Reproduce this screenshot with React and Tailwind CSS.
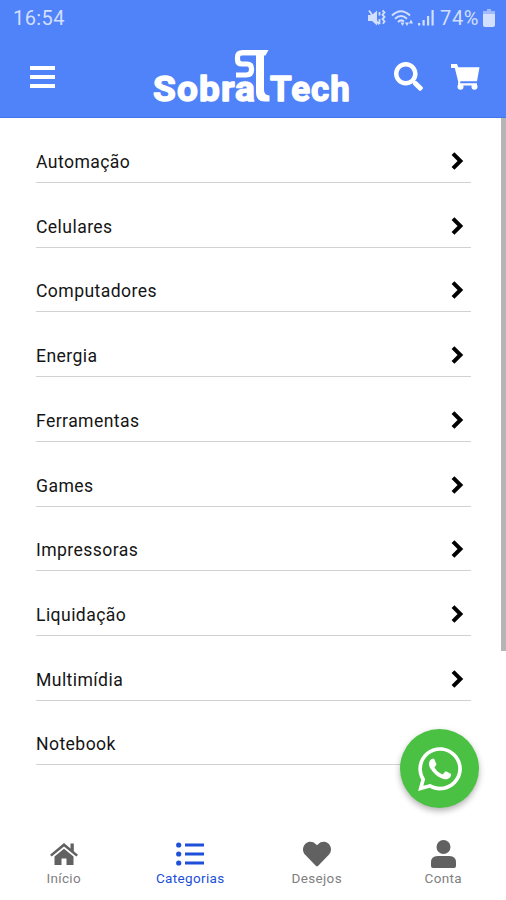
import React, { useState } from "react";
import { FaSearch, FaWhatsapp, FaHeart } from "react-icons/fa";

const categories = [
  "Automação",
  "Celulares",
  "Computadores",
  "Energia",
  "Ferramentas",
  "Games",
  "Impressoras",
  "Liquidação",
  "Multimídia",
  "Notebook",
];

function StatusIcons() {
  return (
    <svg className="h-5 w-[78px]" viewBox="0 0 78 20" fill="currentColor">
      {/* Muted speaker with vibration */}
      <path d="M0 7h4L9 2.500v15L4 13H0z" />
      <path d="M1 2.500l10 14M11.500 4v3.500M11.500 11v5M14.500 2.500l2 2-2 2.200 2 2.200-2 2.200 2 2.200-1.500 2.500" fill="none" stroke="currentColor" strokeWidth="1.800" />
      {/* Wifi */}
      <g fill="none" stroke="currentColor" strokeWidth="2">
        <path d="M24 7.500q9-8.500 18 0M27 10.800q6-5.500 12 0M30 14q3-3 6-.500" />
      </g>
      <path d="M32.500 14.500h4L34.500 18zM37 14.500h4l-2 3.500zM41 15.500l2-4 2 4z" />
      {/* Signal bars */}
      <path d="M50 15h2.200v2.500H50zM54.500 12h2.200v5.500h-2.200zM59 8h2.200v9.500H59zM63.500 2h2.200v15.500h-2.200z" />
    </svg>
  );
}

function Logo() {
  return (
    <svg className="h-[70px] w-[204px]" viewBox="0 -6 204 70" fill="white" fontFamily="Roboto, sans-serif" fontWeight="700">
      <g stroke="white" strokeWidth="1.400" strokeLinejoin="round">
        <text x="1" y="53" fontSize="35.500" letterSpacing="1.100" textLength="103" lengthAdjust="spacingAndGlyphs">Sobra</text>
        <text x="118" y="53" fontSize="35.500" letterSpacing="1.100" textLength="81" lengthAdjust="spacingAndGlyphs">Tech</text>
      </g>
      {/* Raised S whose top runs into the T, with the T stem curving into the l */}
      <path d="M104 4.700H91Q85.500 4.700 85.500 9.200V11.500Q85.500 16 90 16H95Q99.500 16 99.500 20.500V22Q99.500 27 94 27H84" fill="none" stroke="white" strokeWidth="5.200" />
      <path d="M90 2h26.500l-3 5.500h-1.500V42q0 5 5.500 5.500v6h-5q-8.500 0-8.500-9V7.300H90z" />
    </svg>
  );
}

function HomeIcon() {
  return (
    <svg className="h-[24px] w-[28px]" viewBox="0 0 28 24" fill="currentColor">
      <path d="M14 1L0 12.700l1.700 1.900L14 4.600l12.300 10 1.700-1.900-4.200-3.500V1.600h-3.300v4.900z" />
      <path d="M14 6.800L4.500 14.600V23h7v-6.500h5V23h7v-8.400z" />
    </svg>
  );
}

function ListIcon() {
  return (
    <svg className="h-[24px] w-[28px]" viewBox="0 0 28 24" fill="currentColor">
      <circle cx="2.700" cy="3" r="2.600" />
      <circle cx="2.700" cy="12" r="2.600" />
      <circle cx="2.700" cy="21" r="2.600" />
      <path d="M9 1.600h19v3H9zM9 10.500h19v3H9zM9 19.400h19v3H9z" />
    </svg>
  );
}

function PersonIcon() {
  return (
    <svg className="h-[28px] w-[25px]" viewBox="0 0 25 28" fill="currentColor">
      <circle cx="12.500" cy="7" r="7" />
      <path d="M0 26v-3.500Q0 16 6.500 16h12Q25 16 25 22.500V26q0 2-2 2H2q-2 0-2-2z" />
    </svg>
  );
}

function Chevron() {
  return (
    <svg className="mb-[4px] h-[18px] w-[13px] text-black" viewBox="0 0 13 18" fill="none" stroke="currentColor" strokeWidth="4">
      <path d="M2 1.700L9.400 9L2 16.300" />
    </svg>
  );
}

const tabs = [
  { label: "Início", icon: <HomeIcon /> },
  { label: "Categorias", icon: <ListIcon /> },
  { label: "Desejos", icon: <FaHeart className="h-[28px] w-[28px]" /> },
  { label: "Conta", icon: <PersonIcon /> },
];

export default function App() {
  const [active, setActive] = useState("Categorias");

  return (
    <div className="relative flex h-[900px] w-[506px] flex-col overflow-hidden bg-white font-[Roboto,sans-serif] text-[#151515]">
      <header className="h-[118px] shrink-0 border-b border-[#4576e8] bg-[#5083fa] text-white">
        <div className="flex h-9 items-center justify-between pl-[13px] pr-[11px] text-[20px] text-[#d3dfff]">
          <span className="tracking-[0.4px]">16:54</span>
          <div className="flex items-center">
            <StatusIcons />
            <span className="mr-[4px] -ml-[6px] tracking-[0.6px]">74%</span>
            <svg className="h-[18px] w-[12px]" viewBox="0 0 12 18" fill="currentColor">
              <path d="M4 0h4v2h4v4H0V2h4z" opacity="0.6" />
              <path d="M0 5h12v11q0 2-2 2H2q-2 0-2-2z" />
            </svg>
          </div>
        </div>
        <div className="flex h-[81px] items-center pr-[26px] pl-[30px]">
          <button className="flex w-[25px] flex-col gap-[5px]">
            <span className="h-[4px] w-full bg-white" />
            <span className="h-[4px] w-full bg-white" />
            <span className="h-[4px] w-full bg-white" />
          </button>
          <div className="ml-[97px]">
            <Logo />
          </div>
          <button className="ml-[38px]">
            <FaSearch className="h-[29px] w-[29px]" />
          </button>
          <button className="ml-auto">
            <svg className="h-[26px] w-[29px]" viewBox="0 0 29 26" fill="currentColor">
              <path d="M0 0h6l1.300 3.300H28.500L26 17.300H9.500l-.5 2h17v2.200H7l.2-4L3.800 4H0z" />
              <circle cx="9.500" cy="22.800" r="3" />
              <circle cx="23.500" cy="22.800" r="3" />
            </svg>
          </button>
        </div>
      </header>

      <main className="flex min-h-0 flex-1 justify-between">
        <ul className="w-[471px] pt-[0.4px] pl-9">
          {categories.map((name) => (
            <li key={name} className="flex h-[64.7px] items-end justify-between border-b-[1.5px] border-[#d2d2d2] pr-[7px] pb-[8px]">
              <span className="text-[17.6px] leading-6 tracking-[0.42px]">{name}</span>
              {name !== "Notebook" && <Chevron />}
            </li>
          ))}
        </ul>
        <div className="h-[533px] w-[5px] bg-[#b5b5b5]" />
      </main>

      <nav className="grid h-[70px] w-[506px] shrink-0 grid-cols-4 bg-white">
        {tabs.map(({ label, icon }) => (
          <button
            key={label}
            onClick={() => setActive(label)}
            className={`flex flex-col items-center pt-[9px] pl-[1px] ${active === label ? "text-[#1d4fd8]" : "text-[#616161]"}`}
          >
            <span className="flex h-[30px] items-center">{icon}</span>
            <span className={`text-[13.5px] leading-[19px] tracking-[0.35px] ${active === label ? "" : "text-[#808080]"}`}>{label}</span>
          </button>
        ))}
      </nav>

      {/* Floating chat button */}
      <button className="absolute top-[729px] left-[400px] flex h-[79px] w-[79px] items-center justify-center rounded-full bg-[#4bc144] text-white shadow-[0_3px_6px_rgba(0,0,0,0.3)]">
        <FaWhatsapp className="h-[50px] w-[50px]" />
      </button>
    </div>
  );
}
